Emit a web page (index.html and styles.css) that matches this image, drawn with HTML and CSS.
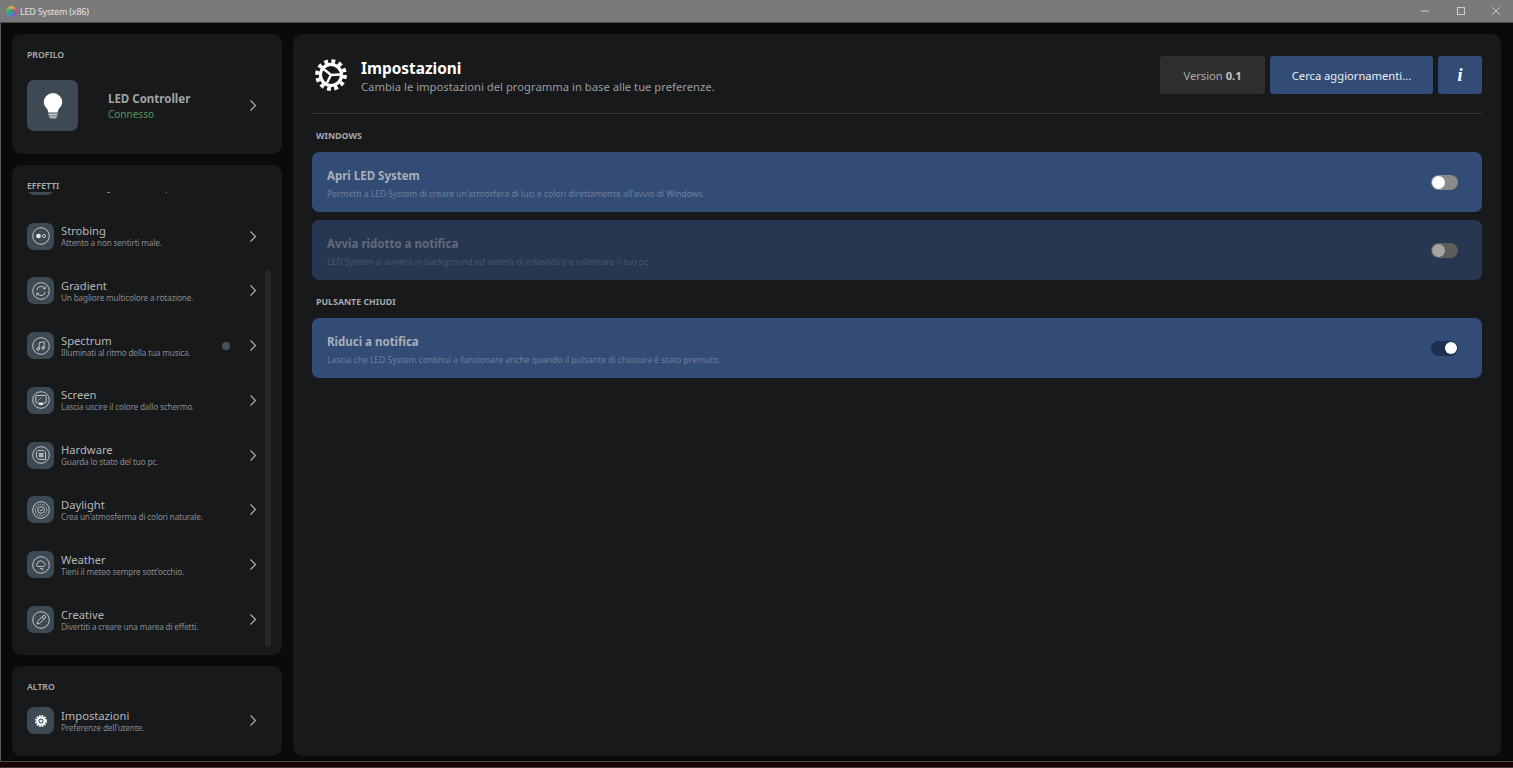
FILE: index.html
```html
<!DOCTYPE html>
<html lang="it">
<head>
<meta charset="utf-8">
<title>LED System (x86)</title>
<link rel="stylesheet" href="styles.css">
</head>
<body>
<div class="window">
  <header class="titlebar">
    <div class="app-name">
      <span class="app-logo"></span>
      <span>LED System (x86)</span>
    </div>
    <div class="win-controls">
      <svg class="win-btn" viewBox="0 0 8 8"><path d="M0 4h8" stroke="#d0d0d0" fill="none"/></svg>
      <svg class="win-btn" viewBox="0 0 8 8"><rect x=".5" y=".5" width="7" height="7" stroke="#d0d0d0" fill="none"/></svg>
      <svg class="win-btn" viewBox="0 0 8 8"><path d="M.3.3l7.400 7.400M7.700.3L.3 7.700" stroke="#d0d0d0" fill="none" stroke-width=".9"/></svg>
    </div>
  </header>
  <div class="body">
    <aside class="sidebar">
      <section class="panel profile">
        <h3 class="section-label">PROFILO</h3>
        <div class="profile-row">
          <div class="profile-icon">
            <svg viewBox="0 0 24 28" width="24" height="28"><path d="M12 1a9.200 9.200 0 0 0-9.200 9.200c0 3.500 2.500 5.200 3.600 7.300.6 1.100.8 2 .8 3h9.600c0-1 .2-1.900.8-3 1.100-2.100 3.600-3.800 3.600-7.300A9.200 9.200 0 0 0 12 1z" fill="#fff"/><path d="M7.500 21.500h9v2h-9z" fill="#c9ced1"/><path d="M7.800 24h8.400l-1.200 2.500H9z" fill="#aab0b4"/></svg>
          </div>
          <div class="profile-text">
            <div class="profile-name">LED Controller</div>
            <div class="profile-status">Connesso</div>
          </div>
          <svg class="chev" viewBox="0 0 6 11"><path d="M.5.5l5 5-5 5" fill="none" stroke="#b5b8ba" stroke-width="1.100"/></svg>
        </div>
      </section>

      <section class="panel effects">
        <h3 class="section-label">EFFETTI</h3>
        <div class="list">
          <div class="item item-scrolled">
            <div class="item-icon"></div>
            <span class="scroll-mark mark-a"></span>
            <span class="scroll-mark mark-b"></span>
          </div>
          <div class="item">
            <div class="item-icon"><svg viewBox="0 0 20 20"><circle cx="10" cy="10" r="8.300" class="ic"/><circle cx="7.500" cy="10" r="2.300" fill="#e8eaeb"/><circle cx="13" cy="10" r="1.500" class="ic"/></svg></div>
            <div class="item-text"><div class="item-title">Strobing</div><div class="item-sub">Attento a non sentirti male.</div></div>
            <svg class="chev" viewBox="0 0 6 11"><path d="M.5.5l5 5-5 5" fill="none" stroke="#b5b8ba" stroke-width="1.100"/></svg>
          </div>
          <div class="item">
            <div class="item-icon"><svg viewBox="0 0 20 20"><circle cx="10" cy="10" r="8.300" class="ic"/><path d="M5.800 9a4.300 4.300 0 0 1 7.400-2.200l.8.800M14.200 11a4.300 4.300 0 0 1-7.400 2.200l-.8-.8" class="ic"/><path d="M14.200 5.500v2.300h-2.300M5.800 14.500v-2.300h2.300" class="ic"/></svg></div>
            <div class="item-text"><div class="item-title">Gradient</div><div class="item-sub">Un bagliore multicolore a rotazione.</div></div>
            <svg class="chev" viewBox="0 0 6 11"><path d="M.5.5l5 5-5 5" fill="none" stroke="#b5b8ba" stroke-width="1.100"/></svg>
          </div>
          <div class="item">
            <div class="item-icon"><svg viewBox="0 0 20 20"><circle cx="10" cy="10" r="8.300" class="ic"/><path d="M8.200 13V6.800l5-1.100V12" class="ic"/><circle cx="7" cy="13" r="1.300" class="ic"/><circle cx="12" cy="12" r="1.300" class="ic"/></svg></div>
            <div class="item-text"><div class="item-title">Spectrum</div><div class="item-sub">Illuminati al ritmo della tua musica.</div></div>
            <span class="dot"></span>
            <svg class="chev" viewBox="0 0 6 11"><path d="M.5.5l5 5-5 5" fill="none" stroke="#b5b8ba" stroke-width="1.100"/></svg>
          </div>
          <div class="item">
            <div class="item-icon"><svg viewBox="0 0 20 20"><circle cx="10" cy="10" r="8.300" class="ic"/><rect x="4.800" y="5.500" width="10.400" height="7.500" rx="1" class="ic"/><path d="M7.500 15h5l-1-2h-3z" fill="#e8eaeb"/><path d="M6.500 11l4-3.500" class="ic" opacity=".6"/></svg></div>
            <div class="item-text"><div class="item-title">Screen</div><div class="item-sub">Lascia uscire il colore dallo schermo.</div></div>
            <svg class="chev" viewBox="0 0 6 11"><path d="M.5.5l5 5-5 5" fill="none" stroke="#b5b8ba" stroke-width="1.100"/></svg>
          </div>
          <div class="item">
            <div class="item-icon"><svg viewBox="0 0 20 20"><circle cx="10" cy="10" r="8.300" class="ic"/><path d="M6.500 5.500h6l2 2v7h-7l-2-2v-6z" class="ic"/><rect x="7.800" y="7.800" width="4.600" height="4.600" fill="#aab0b4"/></svg></div>
            <div class="item-text"><div class="item-title">Hardware</div><div class="item-sub">Guarda lo stato del tuo pc.</div></div>
            <svg class="chev" viewBox="0 0 6 11"><path d="M.5.5l5 5-5 5" fill="none" stroke="#b5b8ba" stroke-width="1.100"/></svg>
          </div>
          <div class="item">
            <div class="item-icon"><svg viewBox="0 0 20 20"><circle cx="10" cy="10" r="8.300" class="ic"/><circle cx="10" cy="10" r="5.800" class="ic" stroke-dasharray="1.500 .8"/><circle cx="10" cy="10" r="3.400" class="ic"/><path d="M8.700 9.800l1.100 1.200 1.600-2" class="ic"/></svg></div>
            <div class="item-text"><div class="item-title">Daylight</div><div class="item-sub">Crea un'atmosferma di colori naturale.</div></div>
            <svg class="chev" viewBox="0 0 6 11"><path d="M.5.5l5 5-5 5" fill="none" stroke="#b5b8ba" stroke-width="1.100"/></svg>
          </div>
          <div class="item">
            <div class="item-icon"><svg viewBox="0 0 20 20"><circle cx="10" cy="10" r="8.300" class="ic"/><path d="M7 11.500a1.800 1.800 0 0 1 0-3.500 2.500 2.500 0 0 1 4.800-.8 2 2 0 0 1 1.800 3.300c-.5.700-1.200 1-2 1z" class="ic"/><path d="M9 13.500l3.500.5M11 15h1" class="ic"/></svg></div>
            <div class="item-text"><div class="item-title">Weather</div><div class="item-sub">Tieni il meteo sempre sott'occhio.</div></div>
            <svg class="chev" viewBox="0 0 6 11"><path d="M.5.5l5 5-5 5" fill="none" stroke="#b5b8ba" stroke-width="1.100"/></svg>
          </div>
          <div class="item">
            <div class="item-icon"><svg viewBox="0 0 20 20"><circle cx="10" cy="10" r="8.300" class="ic"/><path d="M6 14l.7-2.800 5.300-5.300a1.400 1.400 0 0 1 2.100 2.100l-5.300 5.300z" class="ic"/><path d="M11 7l2 2" class="ic"/></svg></div>
            <div class="item-text"><div class="item-title">Creative</div><div class="item-sub">Divertiti a creare una marea di effetti.</div></div>
            <svg class="chev" viewBox="0 0 6 11"><path d="M.5.5l5 5-5 5" fill="none" stroke="#b5b8ba" stroke-width="1.100"/></svg>
          </div>
        </div>
        <div class="scrollbar"></div>
      </section>

      <section class="panel other">
        <h3 class="section-label">ALTRO</h3>
        <div class="item">
          <div class="item-icon"><svg class="gear-small" viewBox="0 0 24 24"><circle cx="12" cy="12" r="10" fill="none" stroke="#fff" stroke-width="4" stroke-dasharray="3.300 1.940"/><circle cx="12" cy="12" r="7" fill="none" stroke="#fff" stroke-width="4"/><circle cx="12" cy="12" r="3.200" fill="#e8eaeb"/></svg></div>
          <div class="item-text"><div class="item-title">Impostazioni</div><div class="item-sub">Preferenze dell'utente.</div></div>
          <svg class="chev" viewBox="0 0 6 11"><path d="M.5.5l5 5-5 5" fill="none" stroke="#b5b8ba" stroke-width="1.100"/></svg>
        </div>
      </section>
    </aside>

    <main class="panel main">
      <div class="main-head">
        <svg class="gear-big" viewBox="0 0 24 24">
          <circle cx="12" cy="12" r="10.400" fill="none" stroke="#fff" stroke-width="3" stroke-dasharray="2.900 2.544"/>
          <circle cx="12" cy="12" r="7.900" fill="none" stroke="#fff" stroke-width="2.400"/>
          <path d="M6.500 7.500L12 12l6.800-.4M12 12l-3 5.800" fill="none" stroke="#fff" stroke-width="1.800"/>
        </svg>
        <div class="head-text">
          <h1 class="page-title">Impostazioni</h1>
          <p class="page-sub">Cambia le impostazioni del programma in base alle tue preferenze.</p>
        </div>
        <div class="head-actions">
          <div class="btn btn-version">Version&nbsp;<b>0.1</b></div>
          <div class="btn btn-primary btn-update">Cerca aggiornamenti...</div>
          <div class="btn btn-primary btn-info">i</div>
        </div>
      </div>
      <hr class="divider">
      <h3 class="group-label">WINDOWS</h3>
      <div class="setting">
        <div class="setting-text"><div class="setting-title">Apri LED System</div><div class="setting-sub">Permetti a LED System di creare un'atmosfera di luci e colori direttamente all'avvio di Windows.</div></div>
        <div class="toggle"><span class="knob"></span></div>
      </div>
      <div class="setting disabled">
        <div class="setting-text"><div class="setting-title">Avvia ridotto a notifica</div><div class="setting-sub">LED System si avvierà in background ed eviterà di infastidirti e rallentare il tuo pc.</div></div>
        <div class="toggle"><span class="knob"></span></div>
      </div>
      <h3 class="group-label">PULSANTE CHIUDI</h3>
      <div class="setting">
        <div class="setting-text"><div class="setting-title">Riduci a notifica</div><div class="setting-sub">Lascia che LED System continui a funzionare anche quando il pulsante di chiusura è stato premuto.</div></div>
        <div class="toggle on"><span class="knob"></span></div>
      </div>
    </main>
  </div>
  <div class="bottom-strip"></div>
</div>
</body>
</html>
```
FILE: styles.css
```css
* { box-sizing: border-box; }
html, body { margin: 0; height: 100%; overflow: hidden; }
body { font-family: "Noto Sans", "Open Sans", sans-serif; background: #0a0a0a; color: #fff; }
h1, h3, p { margin: 0; }

.window { width: 1513px; height: 768px; display: flex; flex-direction: column; border-left: 1px solid #5a5a5a; }
.titlebar { height: 23px; flex: none; background: #7a7a7a; border-bottom: 1px solid #4c4c4c; display: flex; align-items: center; justify-content: space-between; margin-left: -1px; }
.app-name { display: flex; align-items: center; gap: 3px; padding-left: 6px; font-size: 9px; letter-spacing: -.2px; color: #e2e2e2; }
.app-logo { width: 11px; height: 11px; border-radius: 50%; background: radial-gradient(circle, #2f9c8c 0 32%, transparent 36%), conic-gradient(#e9b23c, #d0487a, #7a5bc0, #3c8fd0, #54b45a, #e9b23c); }
.win-controls { display: flex; gap: 27.500px; padding-right: 13px; }
.win-btn { width: 8px; height: 8px; display: block; }

.body { flex: 1; display: flex; gap: 11px; padding: 11px 12px 5px 11px; min-height: 0; }
.sidebar { width: 270px; flex: none; display: flex; flex-direction: column; gap: 11px; }
.panel { background: #17191b; border-radius: 9px; }
.section-label { font-size: 8.700px; font-weight: 600; color: #a9adb1; line-height: 12px; }

.profile { height: 120px; padding: 15px 15px 0; flex: none; }
.profile-row { display: flex; align-items: center; margin-top: 19px; }
.profile-icon { width: 51px; height: 51px; border-radius: 7px; background: #3e4a53; display: flex; align-items: center; justify-content: center; flex: none; }
.profile-text { margin-left: 30px; flex: 1; padding-top: 2px; }
.profile-name { font-size: 11.500px; font-weight: 700; color: #a0a3a7; line-height: 15px; }
.profile-status { font-size: 10px; color: #4f9a55; line-height: 15px; margin-top: 1px; }

.chev { width: 6px; height: 11px; flex: none; margin-right: 11px; margin-left: auto; }

.effects { flex: 1; min-height: 0; position: relative; padding: 15px 15px 0; display: flex; flex-direction: column; }
.list { flex: 1; min-height: 0; overflow: hidden; display: flex; flex-direction: column; gap: 27px; }
.item-scrolled { margin-top: -24.700px; flex: none; }
.scroll-mark { position: absolute; top: 24.700px; height: 1px; background: #7f8387; }
.mark-a { left: 80px; width: 3px; }
.mark-b { left: 139px; width: 1px; }
.scrollbar { position: absolute; left: 253px; top: 105px; width: 6px; height: 377px; border-radius: 3px; background: #25272a; }

.item { display: flex; align-items: center; height: 27.800px; flex: none; position: relative; }
.item-icon { width: 27px; height: 27px; border-radius: 7px; background: #3e4a53; display: flex; align-items: center; justify-content: center; flex: none; }
.item-icon svg { width: 20px; height: 20px; display: block; }
.item-icon .gear-small { width: 12px; height: 12px; }
.ic { fill: none; stroke: #d5d8da; stroke-width: .85; }
.item-text { margin-left: 7px; }
.item-title { font-size: 11.200px; line-height: 14px; color: #b4b7ba; }
.item-sub { font-size: 8.200px; letter-spacing: -.16px; line-height: 10px; color: #878b8f; }
.dot { position: absolute; left: 195px; top: 10px; width: 8px; height: 8px; border-radius: 50%; background: #46525b; }

.other { height: 90px; padding: 15px 15px 0; flex: none; }
.other .item { margin-top: 14px; }

.main { flex: 1; padding: 0 19px; }
.main-head { display: flex; align-items: center; height: 79px; padding-top: 3px; }
.gear-big { width: 32px; height: 32px; flex: none; margin-left: 3px; }
.head-text { margin-left: 14px; padding-top: 5px; }
.page-title { font-size: 15.400px; font-weight: 700; line-height: 19px; color: #fff; }
.page-sub { font-size: 11.250px; line-height: 18px; color: #9a9da0; }
.head-actions { margin-left: auto; display: flex; gap: 5px; }
.btn { height: 38px; border-radius: 3px; display: flex; align-items: center; justify-content: center; font-size: 11.200px; }
.btn-version { width: 105px; background: #2f2f2f; color: #a9a9a9; }
.btn-version b { color: #c4c4c4; font-weight: 700; }
.btn-primary { background: #334c76; color: #e9edf3; }
.btn-update { width: 163px; }
.btn-info { width: 44px; font-family: "Liberation Serif", serif; font-style: italic; font-weight: 700; font-size: 18px; color: #fff; }
.divider { border: 0; height: 1px; background: #333538; margin: 0; }

.group-label { font-size: 8.800px; font-weight: 700; line-height: 12px; color: #a5a9ad; margin: 16px 0 10px 4px; }

.setting { height: 60px; border-radius: 7px; background: #334c76; padding: 0 24px 0 15px; display: flex; align-items: center; justify-content: space-between; margin-bottom: 8px; }
.setting-text { padding-top: 4px; }
.setting-title { font-size: 11.500px; font-weight: 700; line-height: 16px; color: #a8afba; }
.setting-sub { font-size: 8.500px; line-height: 14px; margin-top: 3px; color: #6e7f9a; }
.setting.disabled { background: #273752; }
.setting.disabled .setting-title { color: #616a79; }
.setting.disabled .setting-sub { color: #4a5568; }

.toggle { width: 27px; height: 15px; border-radius: 8px; background: #8a8a8a; position: relative; flex: none; }
.knob { position: absolute; left: 1px; top: 1px; width: 13px; height: 13px; border-radius: 50%; background: #fff; }
.setting.disabled .toggle { background: #5d5d5d; }
.setting.disabled .knob { background: #a5a5a5; }
.toggle.on { background: #1d2f52; }
.toggle.on .knob { left: 14px; width: 12px; height: 12px; top: 1.500px; }

.bottom-strip { height: 7px; flex: none; background: #1c0303; border-top: 1px solid #4a4a4a; border-bottom: 1px solid #3a3a3a; margin-left: -1px; }
```
